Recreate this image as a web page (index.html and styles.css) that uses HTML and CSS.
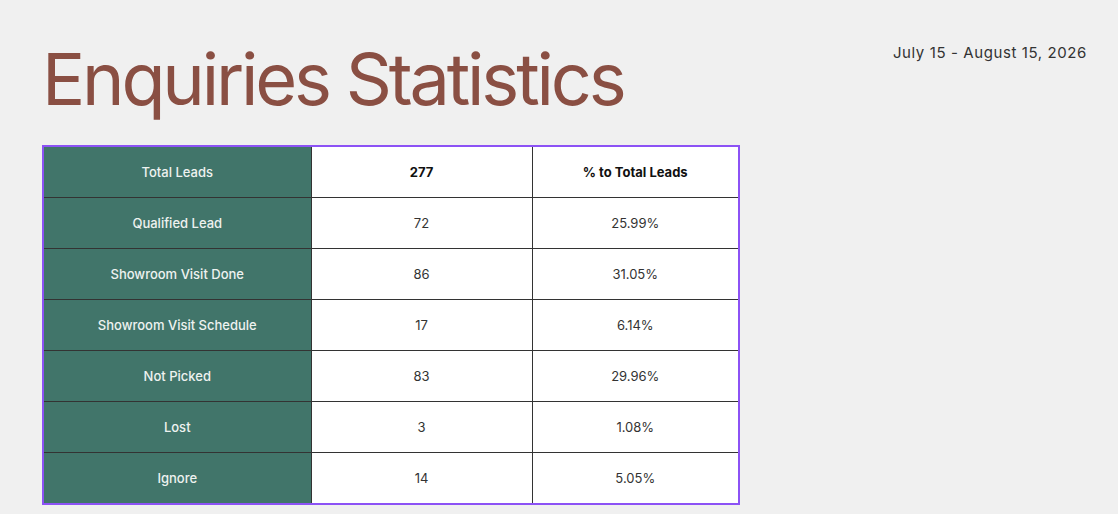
FILE: index.html
```html
<!DOCTYPE html>
<html>
<head>
<meta charset="utf-8">
<link rel="stylesheet" href="styles.css">
</head>
<body>
<div class="page">
  <header class="top">
    <h1 class="title">Enquiries Statistics</h1>
    <div class="date">July 15 - August 15, 2026</div>
  </header>
  <table class="stats">
    <colgroup>
      <col class="c1"><col class="c2"><col class="c3">
    </colgroup>
    <tr><th class="label">Total Leads</th><td class="strong">277</td><td class="strong">% to Total Leads</td></tr>
    <tr><th class="label">Qualified Lead</th><td>72</td><td>25.99%</td></tr>
    <tr><th class="label">Showroom Visit Done</th><td>86</td><td>31.05%</td></tr>
    <tr><th class="label">Showroom Visit Schedule</th><td>17</td><td>6.14%</td></tr>
    <tr><th class="label">Not Picked</th><td>83</td><td>29.96%</td></tr>
    <tr><th class="label">Lost</th><td>3</td><td>1.08%</td></tr>
    <tr><th class="label">Ignore</th><td>14</td><td>5.05%</td></tr>
  </table>
</div>
</body>
</html>
```
FILE: styles.css
```css
html, body {
  margin: 0;
  padding: 0;
  background: #f0f0f0;
}
.page {
  width: 1118px;
  height: 514px;
  box-sizing: border-box;
  padding: 0 31px 0 42px;
  font-family: "Inter", "Liberation Sans", sans-serif;
  overflow: hidden;
}
.top {
  display: flex;
  justify-content: space-between;
  align-items: flex-start;
  height: 145px;
}
.title {
  margin: 31px 0 0 0;
  font-size: 72px;
  font-weight: 400;
  line-height: 96px;
  letter-spacing: -3.2px;
  color: #8a4f43;
}
.date {
  margin-top: 43px;
  font-size: 15px;
  line-height: 20px;
  letter-spacing: 0.6px;
  color: #333;
}
.stats {
  border-collapse: collapse;
  border: 2px solid #8c52f5;
  width: 696px;
  table-layout: fixed;
  font-size: 13px;
  color: #333;
}
.c1 { width: 268px; }
.c2 { width: 221px; }
.c3 { width: 207px; }
.stats th, .stats td {
  border: 1px solid #333;
  height: 50px;
  padding: 0;
  text-align: center;
  vertical-align: middle;
  font-weight: 400;
}
.stats td {
  background: #ffffff;
}
.stats th.label {
  background: #41756a;
  color: #eef2f0;
  font-weight: 500;
}
.stats td.strong {
  font-weight: 700;
  color: #111;
}
```
